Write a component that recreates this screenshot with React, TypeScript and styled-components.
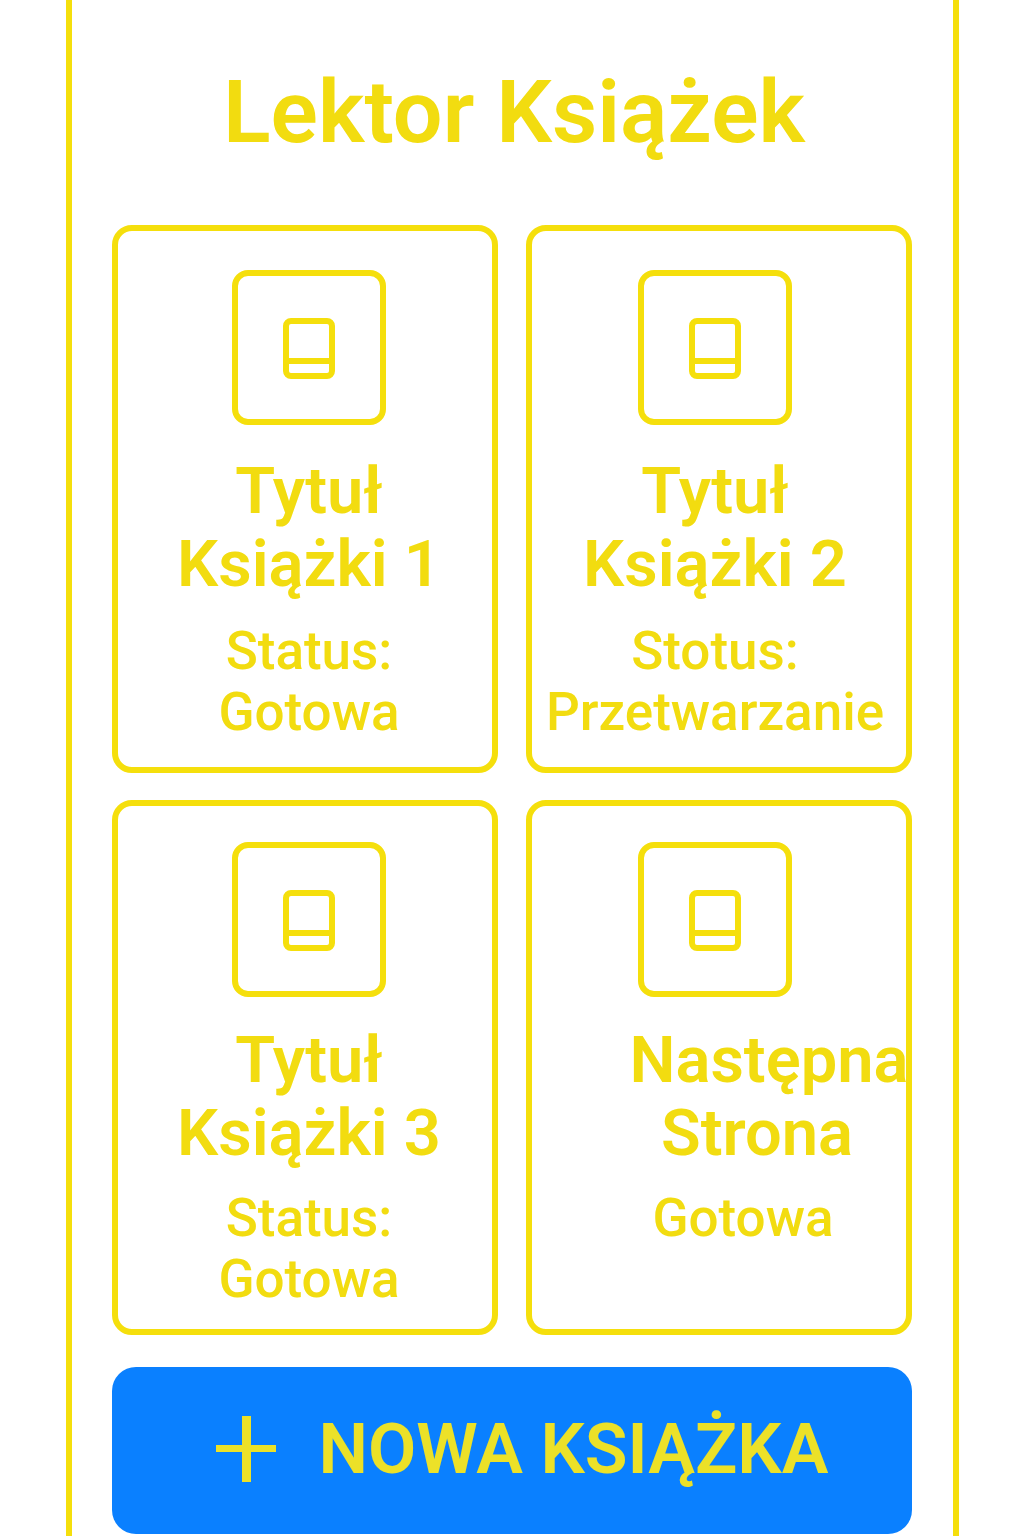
import React from "react";
import styled, { createGlobalStyle } from "styled-components";

const YELLOW = "#f5df0c";
const BLUE = "#0a80ff";

const GlobalStyle = createGlobalStyle`
  *, *::before, *::after { box-sizing: border-box; }
  body {
    margin: 0;
    background: #ffffff;
    color: #f2dc10;
    font-family: Roboto, "Liberation Sans", sans-serif;
  }
`;

const Shell = styled.main`
  min-height: 100vh;
  margin: 0 65px 0 66px;
  padding: 64px 41px 2px 40px;
  border: solid ${YELLOW};
  border-width: 0 6px;
  display: flex;
  flex-direction: column;
`;

const PageTitle = styled.h1`
  margin: 0 0 65px;
  padding-left: 4px;
  font-size: 88px;
  line-height: 96px;
  font-weight: 600;
  text-align: center;
  white-space: nowrap;
`;

const Shelf = styled.section`
  display: grid;
  grid-template-columns: repeat(2, minmax(0, 1fr));
  gap: 27px 28px;
`;

const Card = styled.article<{ $side: "left" | "right"; $compact: boolean }>`
  display: flex;
  flex-direction: column;
  align-items: center;
  padding-top: ${(p) => (p.$compact ? 36 : 39)}px;
  padding-bottom: ${(p) => (p.$compact ? 19 : 24)}px;
  padding-left: ${(p) => (p.$side === "left" ? 8 : 0)}px;
  padding-right: ${(p) => (p.$side === "right" ? 8 : 0)}px;
  border: 6px solid ${YELLOW};
  border-radius: 20px;
`;

const Cover = styled.div<{ $compact: boolean }>`
  display: grid;
  place-items: center;
  width: 154px;
  height: 155px;
  margin-bottom: ${(p) => (p.$compact ? 27 : 30)}px;
  border: 6px solid ${YELLOW};
  border-radius: 16px;
`;

const BookTitle = styled.h2<{ $compact: boolean }>`
  width: 100%;
  margin: 0 0 ${(p) => (p.$compact ? 18 : 20)}px;
  font-size: 65px;
  line-height: 73px;
  font-weight: 600;
`;

const Status = styled.p`
  width: 100%;
  margin: 0;
  font-size: 53px;
  line-height: 61px;
  font-weight: 500;
`;

const Line = styled.span<{ $indent?: number }>`
  display: flex;
  justify-content: center;
  padding-left: ${(p) => p.$indent ?? 0}px;
  white-space: nowrap;
`;

const NewBookButton = styled.button`
  display: flex;
  align-items: center;
  justify-content: center;
  gap: 43px;
  width: 100%;
  height: 167px;
  margin: 32px 0 0;
  padding: 0 0 4px 20px;
  border: 0;
  border-radius: 24px;
  background: ${BLUE};
  color: #ece128;
  font: 600 70px/80px Roboto, "Liberation Sans", sans-serif;
  white-space: nowrap;
  cursor: pointer;
`;

const BookIcon = () => (
  <svg width="54" height="62" viewBox="0 0 54 62" fill="none" stroke={YELLOW} strokeWidth="6" aria-hidden="true">
    <rect x="4" y="4" width="46" height="55" rx="5" />
    <path d="M4 44H50" />
  </svg>
);

const PlusIcon = () => (
  <svg width="60" height="66" viewBox="0 0 60 66" fill="#ece128" aria-hidden="true">
    <rect x="26" y="0" width="9" height="66" />
    <rect x="0" y="29" width="60" height="7" />
  </svg>
);

type TextLine = { text: string; indent?: number };
type Book = { title: TextLine[]; status: TextLine[] };

const books: Book[] = [
  { title: [{ text: "Tytuł" }, { text: "Książki 1" }], status: [{ text: "Status:" }, { text: "Gotowa" }] },
  { title: [{ text: "Tytuł" }, { text: "Książki 2" }], status: [{ text: "Stotus:" }, { text: "Przetwarzanie" }] },
  { title: [{ text: "Tytuł" }, { text: "Książki 3" }], status: [{ text: "Status:" }, { text: "Gotowa" }] },
  {
    title: [{ text: "Następna", indent: 108 }, { text: "Strona", indent: 84 }],
    status: [{ text: "Gotowa", indent: 56 }],
  },
];

const Lines = ({ items }: { items: TextLine[] }) => (
  <>
    {items.map((line) => (
      <Line key={line.text} $indent={line.indent}>
        {line.text}
      </Line>
    ))}
  </>
);

export default function App() {
  return (
    <>
      <GlobalStyle />
      <Shell>
        <PageTitle>Lektor Książek</PageTitle>
        <Shelf>
          {books.map((book, i) => {
            const compact = i >= 2;
            return (
              <Card key={i} $side={i % 2 === 0 ? "left" : "right"} $compact={compact}>
                <Cover $compact={compact}>
                  <BookIcon />
                </Cover>
                <BookTitle $compact={compact}>
                  <Lines items={book.title} />
                </BookTitle>
                <Status>
                  <Lines items={book.status} />
                </Status>
              </Card>
            );
          })}
        </Shelf>
        <NewBookButton type="button">
          <PlusIcon />
          <span>NOWA KSIĄŻKA</span>
        </NewBookButton>
      </Shell>
    </>
  );
}
